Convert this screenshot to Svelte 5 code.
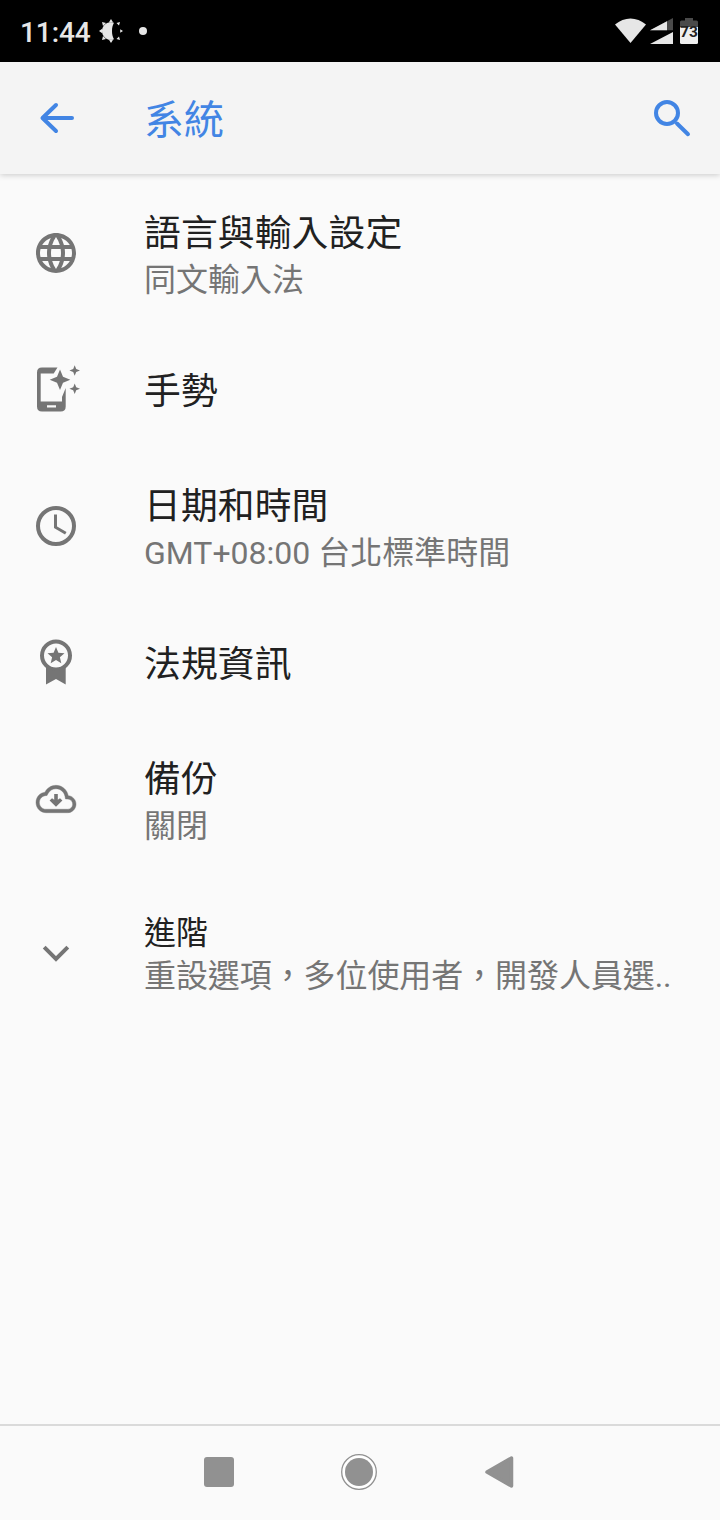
<script lang="ts">
	interface Setting {
		icon: 'globe' | 'gesture' | 'clock' | 'badge' | 'cloud' | 'chevron';
		title: string;
		summary?: string;
		kind?: 'single' | 'advanced';
	}

	const settings: Setting[] = [
		{ icon: 'globe', title: '語言與輸入設定', summary: '同文輸入法' },
		{ icon: 'gesture', title: '手勢', kind: 'single' },
		{ icon: 'clock', title: '日期和時間', summary: 'GMT+08:00 台北標準時間' },
		{ icon: 'badge', title: '法規資訊', kind: 'single' },
		{ icon: 'cloud', title: '備份', summary: '關閉' },
		{ icon: 'chevron', title: '進階', summary: '重設選項，多位使用者，開發人員選..', kind: 'advanced' }
	];
</script>

<div class="screen" lang="zh-Hant">
	<div class="status-bar">
		<span class="time">11:44</span>
		<svg class="brightness" width="24" height="24" viewBox="0 0 24 24" fill="#e6e6e6">
			<path d="M12 3.200a8.800 8.800 0 1 0 3 17C13.500 17.500 13 15 13 12S13.500 6.500 15 3.800Z" />
			<path d="M12 0l2.200 3.400H9.800zM12 24l2.200-3.400H9.800zM0 12l3.200-2.200v4.400zM24 12l-2.800-1.700v3.400zM3 3l4 1-3 3zM21 3l-1 3.500-2.500-2.500zM3 21l1-4 3 3zM21 21l-3.500-1 2.500-2.500z" />
		</svg>
		<span class="dot"></span>
		<svg class="signals" width="84" height="26" viewBox="0 0 84 26">
			<path d="M0 6.500C9.500 -1.500 21.500 -1.500 31 6.500L15.500 25Z" fill="#e6e6e6" />
			<path d="M35 12.200L58 0v12.200Z" fill="#4a4a4a" />
			<path d="M35 12.200L52 3.200v9ZM35 26L58 14v12Z" fill="#e6e6e6" />
			<path d="M65 9V4q0-1.500 1.500-1.500H70V0h8v2.500h3.500Q83 2.500 83 4v5Z" fill="#4a4a4a" />
			<path d="M65 9h18v15.500q0 1.500-1.500 1.500h-15Q65 26 65 24.500Z" fill="#efefef" />
			<text x="74" y="19.200" text-anchor="middle">73</text>
		</svg>
	</div>

	<header>
		<button class="icon-cell" aria-label="返回">
			<svg width="48" height="48" viewBox="0 0 48 48" fill="none" stroke="#4285e4" stroke-width="4" stroke-linecap="round" stroke-linejoin="round">
				<path d="M40 24H11M24 11L10.500 24 24 37" />
			</svg>
		</button>
		<h1>系統</h1>
		<button class="search" aria-label="搜尋">
			<svg width="48" height="48" viewBox="0 0 48 48" fill="none" stroke="#4285e4" stroke-width="4" stroke-linecap="round">
				<circle cx="19" cy="19" r="11" />
				<path d="M29 29.500L40 40.200" />
			</svg>
		</button>
	</header>

	<main>
		{#each settings as item}
			<div class="row {item.kind ?? ''}">
				<div class="icon-cell">
					{#if item.icon === 'globe'}
						<svg width="48" height="48" viewBox="0 0 24 24" fill="#757575">
							<path d="M11.990 2C6.470 2 2 6.480 2 12s4.470 10 9.990 10C17.520 22 22 17.520 22 12S17.520 2 11.990 2zm6.930 6h-2.950a15.650 15.650 0 0 0-1.380-3.560A8.030 8.030 0 0 1 18.920 8zM12 4.040c.83 1.200 1.480 2.530 1.910 3.960h-3.820c.43-1.430 1.080-2.760 1.910-3.960zM4.260 14C4.100 13.360 4 12.690 4 12s.1-1.360.26-2h3.380c-.08.660-.14 1.320-.14 2s.06 1.340.14 2H4.260zm.82 2h2.950c.32 1.250.780 2.450 1.380 3.560A7.987 7.987 0 0 1 5.080 16zm2.950-8H5.080a7.987 7.987 0 0 1 4.330-3.560A15.650 15.650 0 0 0 8.030 8zM12 19.960c-.83-1.200-1.480-2.530-1.910-3.960h3.820c-.43 1.430-1.080 2.760-1.910 3.960zM14.340 14H9.660c-.09-.66-.16-1.320-.16-2s.07-1.350.16-2h4.680c.09.650.160 1.320.160 2s-.07 1.340-.16 2zm.25 5.560c.6-1.110 1.060-2.310 1.380-3.560h2.950a8.030 8.030 0 0 1-4.330 3.560zM16.360 14c.08-.66.14-1.320.14-2s-.06-1.340-.14-2h3.380c.16.640.26 1.310.26 2s-.1 1.360-.26 2h-3.380z" />
						</svg>
					{:else if item.icon === 'gesture'}
						<svg width="48" height="48" viewBox="0 0.500 48 48" fill="#757575">
							<path fill-rule="evenodd" d="M25.500 2H10Q5 2 5 7v34q0 5 5 5h18.700q5 0 5-5V22.500L30 31.500V36H8.700V8h13ZM15 39.700h9V42h-9Z" />
							<path d="M28 4l3 7.300 7.300 3-7.300 3L28 24.600l-3-7.300-7.300-3 7.300-3ZM42.700-.3l1.500 3.800L48 5l-3.800 1.500-1.500 3.800-1.500-3.800L37.400 5l3.800-1.500ZM42.700 18l1.500 3.800 3.800 1.500-3.800 1.500-1.500 3.800-1.500-3.800-3.800-1.500 3.800-1.500Z" />
						</svg>
					{:else if item.icon === 'clock'}
						<svg width="48" height="48" viewBox="0 0 48 48" fill="none" stroke="#757575">
							<circle cx="24" cy="24" r="18" stroke-width="4" />
							<path d="M23.500 14v11.200l9 5.300" stroke-width="3" stroke-linecap="square" />
						</svg>
					{:else if item.icon === 'badge'}
						<svg width="48" height="48" viewBox="0 0.500 48 48" fill="#757575">
							<circle cx="24" cy="17" r="14" fill="none" stroke="#757575" stroke-width="4" />
							<path d="M14 28.500q10 7 19.700 0V46L24 40.500 14 46Z" />
							<path d="M24 8.500l2.400 5.800 6.100.5-4.600 4 1.400 6-5.300-3.200-5.300 3.200 1.400-6-4.600-4 6.100-.5Z" />
						</svg>
					{:else if item.icon === 'cloud'}
						<svg width="48" height="48" viewBox="0 0 48 48" fill="#757575">
							<path transform="translate(4 3.500) scale(1.6667 1.710)" stroke="#757575" stroke-width="0.250" d="M19.350 10.040C18.670 6.590 15.640 4 12 4 9.110 4 6.600 5.640 5.350 8.040 2.340 8.360 0 10.910 0 14c0 3.310 2.690 6 6 6h13c2.760 0 5-2.240 5-5 0-2.640-2.050-4.780-4.650-4.960zM19 18H6c-2.210 0-4-1.790-4-4 0-2.050 1.530-3.760 3.560-3.970l1.070-.11.5-.95C8.080 7.140 9.940 6 12 6c2.620 0 4.880 1.860 5.390 4.430l.3 1.500 1.530.11c1.560.1 2.780 1.410 2.780 2.960 0 1.650-1.350 3-3 3z" />
							<path d="M22.200 19h3.600v5.800l2.200-1.600 2.400 2.200L24 31.700l-6.400-6.300 2.400-2.200 2.200 1.600Z" />
						</svg>
					{:else}
						<svg width="48" height="48" viewBox="0 0 48 48" fill="none" stroke="#757575" stroke-width="4">
							<path d="M12.200 18.200L24 30l11.800-11.800" />
						</svg>
					{/if}
				</div>
				<div class="text">
					<div class="title">{item.title}</div>
					{#if item.summary}
						<div class="summary">{item.summary}</div>
					{/if}
				</div>
			</div>
		{/each}
	</main>

	<nav>
		<svg width="30" height="30" viewBox="0 0 30 30"><rect width="30" height="30" rx="3" fill="#919191" /></svg>
		<svg width="36" height="36" viewBox="0 0 36 36">
			<circle cx="18" cy="18" r="17.300" fill="#fff" stroke="#919191" stroke-width="1.300" />
			<circle cx="18" cy="18" r="14" fill="#919191" />
		</svg>
		<svg width="30" height="32" viewBox="-1 0 30 32">
			<path d="M2 16L26.500 2v28Z" fill="#919191" stroke="#919191" stroke-width="3.500" stroke-linejoin="round" />
		</svg>
	</nav>
</div>

<style>
	:global(body) {
		margin: 0;
	}

	.screen {
		display: flex;
		flex-direction: column;
		width: 720px;
		height: 1520px;
		overflow: hidden;
		background: #fafafa;
		font-family: Roboto, 'Noto Sans CJK TC', sans-serif;
	}

	svg {
		display: block;
		flex: none;
		overflow: visible;
	}

	.status-bar {
		display: flex;
		align-items: center;
		height: 62px;
		padding: 0 21px 0 20px;
		box-sizing: border-box;
		background: #000;
		color: #e6e6e6;
	}

	.time {
		width: 79px;
		font-size: 28px;
		font-weight: 500;
		line-height: 62px;
		letter-spacing: -0.1px;
		padding-top: 3px;
	}

	.dot {
		width: 8px;
		height: 8px;
		margin-left: 16px;
		border-radius: 50%;
		background: #e6e6e6;
	}

	.signals {
		margin-left: auto;
	}

	.signals text {
		font-size: 15.500px;
		font-weight: 700;
		fill: #222;
	}

	header {
		position: relative;
		display: flex;
		align-items: center;
		height: 112px;
		background: #f4f4f4;
		box-shadow: 0 1px 6px rgba(0, 0, 0, 0.2);
	}

	button {
		padding: 0;
		border: 0;
		background: none;
	}

	.icon-cell {
		display: flex;
		flex: none;
		width: 112px;
		justify-content: center;
	}

	h1 {
		margin: 0 0 0 32px;
		padding-top: 6px;
		color: #4285e4;
		font-size: 40px;
		font-weight: 400;
		line-height: 56px;
	}

	.search {
		margin: 0 24px 0 auto;
	}

	main {
		flex: 1;
	}

	.row {
		display: flex;
		align-items: center;
		height: 158px;
	}

	.row.single {
		height: 115px;
	}

	.row.advanced {
		height: 150px;
	}

	.text {
		margin-left: 32px;
		padding-top: 4px;
		white-space: nowrap;
	}

	.title {
		color: #212121;
		font-size: 36.800px;
		line-height: 50px;
		letter-spacing: 0.100px;
	}

	.summary {
		color: #757575;
		font-size: 32px;
		line-height: 42px;
	}

	.advanced .text {
		padding-top: 3px;
	}

	.advanced .title {
		font-size: 32px;
		line-height: 43px;
		letter-spacing: 0;
	}

	.advanced .summary {
		letter-spacing: -0.080px;
	}

	nav {
		display: flex;
		align-items: center;
		gap: 107px;
		height: 96px;
		padding: 0 204px 2px;
		box-sizing: border-box;
		border-top: 2px solid #dadada;
	}
</style>
